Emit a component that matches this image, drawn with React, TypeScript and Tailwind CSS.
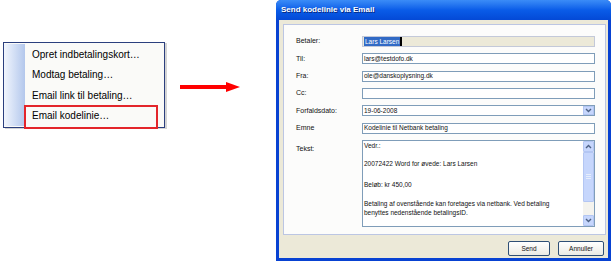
import React from 'react';

const font = "font-['Liberation_Sans',Arial,sans-serif]";

function Chevron({ up }: { up?: boolean }) {
  return (
    <svg width="7" height="5" viewBox="0 0 7 5">
      <polyline
        points={up ? '1,4 3.5,1.5 6,4' : '1,1 3.5,3.5 6,1'}
        fill="none"
        stroke="#4d6185"
        strokeWidth="1.4"
      />
    </svg>
  );
}

function ContextMenu() {
  const items = ['Opret indbetalingskort…', 'Modtag betaling…', 'Email link til betaling…', 'Email kodelinie…'];
  return (
    <div className="mt-[42px] ml-[3px] w-[162px] border border-[#2b3f7e] bg-[#fafaf8] py-px flex shadow-[2px_1px_0_#d4d4d4]">
      <div className="w-[21px] bg-gradient-to-r from-[#f2f6fd] to-[#b3c7ec]" />
      <div className="flex-1 flex flex-col">
        {items.map((t, i) => (
          <div key={t} className="relative h-[20.5px] flex items-center pl-[7px] text-[10px] text-black">
            {t}
            {i === 3 && <div className="absolute left-[-1px] right-[6px] top-[-1px] bottom-[-3px] border-2 border-[#e3252b]" />}
          </div>
        ))}
      </div>
    </div>
  );
}

function Arrow() {
  return (
    <svg width="106" height="262" viewBox="0 0 106 262" className="shrink-0">
      <line x1="10" y1="87" x2="58" y2="87" stroke="#ff0000" strokeWidth="4" />
      <polygon points="56,82 70,87 56,92" fill="#ff0000" />
    </svg>
  );
}

function Field({ label, children }: { label: string; children: React.ReactNode }) {
  return (
    <div className="flex h-[11px] items-center">
      <div className="w-[66px] text-[7px] text-[#111]">{label}</div>
      <div className="w-[233px] h-[11px]">{children}</div>
    </div>
  );
}

function TextBox({ value, children }: { value?: string; children?: React.ReactNode }) {
  return (
    <div className="h-full border border-[#7f9db9] bg-white flex items-center pl-[1px] text-[6.5px] text-[#111] relative">
      {value}
      {children}
    </div>
  );
}

function Dialog() {
  return (
    <div className="w-[335px] h-[261px] flex flex-col rounded-t-[5px] overflow-hidden bg-[#0842d2] px-[3px] pb-[3px]">
      <div className="h-[20px] -mx-[3px] px-[5px] flex items-center bg-gradient-to-b from-[#3b8cf7] via-[#0a5ce8] to-[#0449d6] text-white font-bold text-[8px] [text-shadow:1px_1px_0_#0a2a80]">
        Send kodelinie via Email
      </div>
      <div className="flex-1 bg-[#ece9d8] flex flex-col pt-[4px] pl-[4px] pr-[2px]">
        <div className="h-[211px] border border-[#bcc6e3] bg-[#fcfcfb] pl-[12px] pt-[11px] flex flex-col gap-[6.33px]">
          <Field label="Betaler:">
            <div className="h-full border border-[#c3c9d9] bg-[#ece9d8] flex items-center pl-[1px] text-[6.5px]">
              <span className="bg-[#316ac5] text-white px-px leading-[9px]">Lars Larsen</span>
              <span className="w-[2px] h-[9px] bg-black" />
            </div>
          </Field>
          <Field label="Til:">
            <TextBox value="lars@testdofo.dk" />
          </Field>
          <Field label="Fra:">
            <TextBox value="ole@danskoplysning.dk" />
          </Field>
          <Field label="Cc:">
            <TextBox />
          </Field>
          <Field label="Forfaldsdato:">
            <TextBox value="19-06-2008">
              <div className="absolute right-0 top-0 bottom-0 w-[11px] bg-[#c6d6fc] border border-[#b3c6f3] flex items-center justify-center">
                <Chevron />
              </div>
            </TextBox>
          </Field>
          <Field label="Emne">
            <TextBox value="Kodelinie til Netbank betaling" />
          </Field>
          <div className="flex">
            <div className="w-[66px] text-[7px] text-[#111] pt-[4px]">Tekst:</div>
            <div className="w-[233px] h-[87px] border border-[#7f9db9] bg-white flex text-[6.5px] text-[#111]">
              <div className="flex-1 pl-[1px] pt-[1px] leading-[8.5px]">
                <div>Vedr.:</div>
                <div className="mt-[9.8px]">20072422 Word for øvede: Lars Larsen</div>
                <div className="mt-[12.5px]">Beløb: kr 450,00</div>
                <div className="mt-[10.5px]">Betaling af ovenstående kan foretages via netbank. Ved betaling</div>
                <div>benyttes nedenstående betalingsID.</div>
              </div>
              <div className="w-[11px] bg-[#f4f3ee] flex flex-col">
                <div className="h-[11px] bg-[#c6d6fc] border border-[#b3c6f3] rounded-[1px] flex items-center justify-center">
                  <Chevron up />
                </div>
                <div className="h-[50px] bg-[#c6d6fc] border border-[#b3c6f3] rounded-[1px] flex flex-col items-center justify-center gap-px">
                  <div className="w-[5px] h-px bg-[#e6eefc]" />
                  <div className="w-[5px] h-px bg-[#e6eefc]" />
                  <div className="w-[5px] h-px bg-[#e6eefc]" />
                </div>
                <div className="flex-1" />
                <div className="h-[11px] bg-[#c6d6fc] border border-[#b3c6f3] rounded-[1px] flex items-center justify-center">
                  <Chevron />
                </div>
              </div>
            </div>
          </div>
        </div>
        <div className="flex justify-end gap-[8px] pt-[6px] pr-[2px]">
          <button className="w-[42px] h-[15px] border border-[#2f4f76] rounded-[2px] bg-gradient-to-b from-white to-[#ecebe4] text-[6.5px] text-[#111]">
            Send
          </button>
          <button className="w-[46px] h-[15px] border border-[#2f4f76] rounded-[2px] bg-gradient-to-b from-white to-[#ecebe4] text-[6.5px] text-[#111]">
            Annuller
          </button>
        </div>
      </div>
    </div>
  );
}

export default function App() {
  return (
    <div className={`w-[612px] h-[262px] bg-white flex overflow-hidden ${font}`}>
      <div className="w-[170px] shrink-0">
        <ContextMenu />
      </div>
      <Arrow />
      <Dialog />
    </div>
  );
}
